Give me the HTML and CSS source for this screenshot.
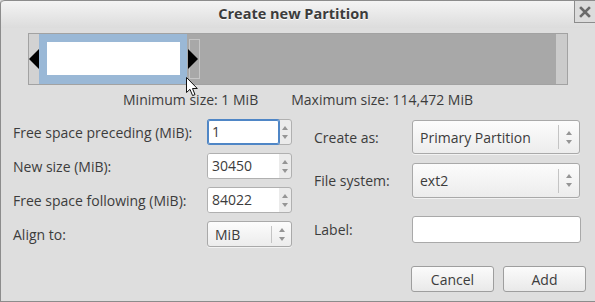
FILE: index.html
```html
<!DOCTYPE html>
<html lang="en">
<head>
    <meta charset="UTF-8">
    <title>Create new Partition</title>
    <link rel="stylesheet" href="styles.css">
</head>
<body>
    <div class="window">
        <header class="titlebar">
            <span class="title">Create new Partition</span>
            <span class="close-btn">
                <svg width="12" height="12" viewBox="0 0 12 12">
                    <path d="M2 2 L10 10 M10 2 L2 10" stroke="#6a6a6a" stroke-width="2.6" stroke-linecap="square"/>
                </svg>
            </span>
        </header>

        <main class="content">
            <!-- partition map -->
            <div class="partmap">
                <div class="edge"></div>
                <div class="newpart"><div class="newpart-inner"></div></div>
                <div class="unalloc"><span class="handle-box"></span></div>
                <div class="edge edge-right"></div>
                <span class="arrow arrow-left"></span>
                <span class="arrow arrow-right"></span>
                <svg class="cursor" width="13" height="20" viewBox="0 0 13 20">
                    <path d="M0.5 0.5 L0.5 15.5 L4 12.3 L6.6 18.6 L9 17.6 L6.5 11.5 L11.3 11.5 Z" fill="#fff" stroke="#111" stroke-width="1" stroke-linejoin="round"/>
                </svg>
            </div>

            <div class="sizes">
                <span>Minimum size: 1 MiB</span>
                <span>Maximum size: 114,472 MiB</span>
            </div>

            <div class="form">
                <div class="col-left">
                    <label>Free space preceding (MiB):</label>
                    <div class="spin focused">
                        <span class="spin-value">1</span>
                        <span class="spin-arrows"><i class="up"></i><i class="down"></i></span>
                    </div>

                    <label>New size (MiB):</label>
                    <div class="spin">
                        <span class="spin-value">30450</span>
                        <span class="spin-arrows"><i class="up"></i><i class="down"></i></span>
                    </div>

                    <label>Free space following (MiB):</label>
                    <div class="spin">
                        <span class="spin-value">84022</span>
                        <span class="spin-arrows"><i class="up"></i><i class="down"></i></span>
                    </div>

                    <label>Align to:</label>
                    <div class="combo combo-small">
                        <span class="combo-value">MiB</span>
                        <span class="combo-sep"></span>
                        <span class="combo-arrows"><i class="up"></i><i class="down"></i></span>
                    </div>
                </div>

                <div class="col-right">
                    <div class="field">
                        <label>Create as:</label>
                        <div class="combo">
                            <span class="combo-value">Primary Partition</span>
                            <span class="combo-sep"></span>
                            <span class="combo-arrows"><i class="up"></i><i class="down"></i></span>
                        </div>
                    </div>
                    <div class="field">
                        <label>File system:</label>
                        <div class="combo combo-tall">
                            <span class="combo-value">ext2</span>
                            <span class="combo-sep"></span>
                            <span class="combo-arrows"><i class="up"></i><i class="down"></i></span>
                        </div>
                    </div>
                    <div class="field field-label">
                        <label>Label:</label>
                        <div class="entry"></div>
                    </div>
                </div>
            </div>

            <div class="actions">
                <button class="btn">Cancel</button>
                <button class="btn">Add</button>
            </div>
        </main>
    </div>
</body>
</html>
```

FILE: styles.css
```css
/* Dialog window */
* {
    box-sizing: border-box;
}

body {
    margin: 0;
    background: #dedede;
    font-family: "Open Sans", "DejaVu Sans", sans-serif;
    font-size: 14px;
    color: #3c3c3c;
}

.window {
    width: 595px;
    height: 302px;
    background: #dedede;
    border-left: 1px solid #8c8c8c;
    border-bottom: 1px solid #8c8c8c;
    border-top-left-radius: 4px;
    display: flex;
    flex-direction: column;
    overflow: hidden;
}

.titlebar {
    height: 28px;
    display: flex;
    align-items: flex-start;
    background: linear-gradient(#f4f4f4, #dcdcdc);
    border-top: 1px solid #8c8c8c;
    border-top-left-radius: 4px;
}

.title {
    flex: 1;
    text-align: center;
    font-weight: bold;
    font-size: 14.5px;
    line-height: 26px;
    color: #3c3c3c;
    text-shadow: 0 1px 0 #fff;
    padding-left: 12px;
}

.close-btn {
    width: 21px;
    height: 23px;
    margin-top: -1px;
    display: flex;
    align-items: center;
    justify-content: center;
    background: #dcdcdc;
    border-left: 1px solid #8c8c8c;
    border-bottom: 1px solid #8c8c8c;
    border-top: 1px solid #8c8c8c;
}

.content {
    flex: 1;
    display: flex;
    flex-direction: column;
}

/* Partition map */
.partmap {
    position: relative;
    margin: 5px 27px 0 27px;
    height: 52px;
    border: 1px solid #a2a2a2;
    display: flex;
}

.edge {
    width: 10px;
    background: #d2d2d2;
}

.edge-right {
    width: 11px;
    background: #cbcbcb;
}

.newpart {
    width: 148px;
    background: #9ab8d6;
    padding: 8px 7px 9px 8px;
}

.newpart-inner {
    height: 100%;
    background: #fff;
}

.unalloc {
    flex: 1;
    background: #a8a8a8;
    display: flex;
    align-items: center;
}

.handle-box {
    width: 11px;
    height: 40px;
    margin-left: 2px;
    border: 1px solid #c6c6c6;
}

.arrow {
    position: absolute;
    top: 15px;
    width: 0;
    height: 0;
    border-top: 10px solid transparent;
    border-bottom: 10px solid transparent;
}

.arrow-left {
    left: 0;
    border-right: 10px solid #000;
}

.arrow-right {
    left: 159px;
    border-left: 10px solid #000;
}

.cursor {
    position: absolute;
    left: 157px;
    top: 43px;
}

.sizes {
    display: flex;
    justify-content: center;
    gap: 33px;
    margin-top: 6px;
    line-height: 18px;
}

/* Form */
.form {
    display: flex;
    margin-top: 10px;
    padding-left: 12px;
}

.col-left {
    display: grid;
    grid-template-columns: 194px 85px;
    grid-auto-rows: 26px;
    row-gap: 8px;
    align-items: center;
    width: 301px;
}

.col-left label {
    padding-top: 1px;
}

.col-right {
    display: flex;
    flex-direction: column;
    gap: 9px;
    padding-top: 1px;
}

.field {
    display: flex;
    align-items: center;
}

.field label {
    width: 98px;
}

.field-label {
    margin-top: 9px;
}

/* Spin buttons */
.spin {
    display: flex;
    height: 26px;
    border: 1px solid #b0b0b0;
    border-radius: 3px;
    background: #ebebeb;
}

.spin-value {
    width: 71px;
    background: #fff;
    padding-left: 4px;
    line-height: 24px;
    border-radius: 2px 0 0 2px;
}

.spin.focused .spin-value {
    box-shadow: 0 0 0 1px #4f86c6, inset 0 0 0 1px #4f86c6;
    border-radius: 2px;
}

.spin-arrows,
.combo-arrows {
    flex: 1;
    display: flex;
    flex-direction: column;
    align-items: center;
    justify-content: center;
    gap: 5px;
}

.up,
.down {
    width: 0;
    height: 0;
    border-left: 3px solid transparent;
    border-right: 3px solid transparent;
}

.up {
    border-bottom: 4px solid #959595;
}

.down {
    border-top: 4px solid #959595;
}

/* Combo boxes */
.combo {
    display: flex;
    align-items: center;
    width: 168px;
    height: 34px;
    border: 1px solid #a9a9a9;
    border-radius: 3px;
    background: linear-gradient(#fcfcfc, #ececec);
    box-shadow: 0 1px 0 rgba(255, 255, 255, 0.6);
}

.combo-tall {
    height: 35px;
}

.combo-value {
    flex: 1;
    padding-left: 7px;
}

.combo-sep {
    width: 1px;
    height: 24px;
    background: #c4c4c4;
}

.combo-arrows {
    flex: 0 0 20px;
}

.combo-small {
    width: 85px;
    height: 26px;
}

.combo-small .combo-sep {
    height: 17px;
}

.combo-small .combo-arrows {
    flex-basis: 19px;
}

.entry {
    width: 169px;
    height: 27px;
    background: #fff;
    border: 1px solid #a9a9a9;
    border-radius: 3px;
}

/* Buttons */
.actions {
    display: flex;
    justify-content: flex-end;
    gap: 9px;
    margin-top: auto;
    margin-bottom: 9px;
    padding-right: 9px;
}

.btn {
    width: 83px;
    height: 26px;
    font-family: inherit;
    font-size: 14px;
    color: #3c3c3c;
    background: linear-gradient(#fbfbfb, #e9e9e9);
    border: 1px solid #9e9e9e;
    border-radius: 3px;
    padding: 0;
}
```
